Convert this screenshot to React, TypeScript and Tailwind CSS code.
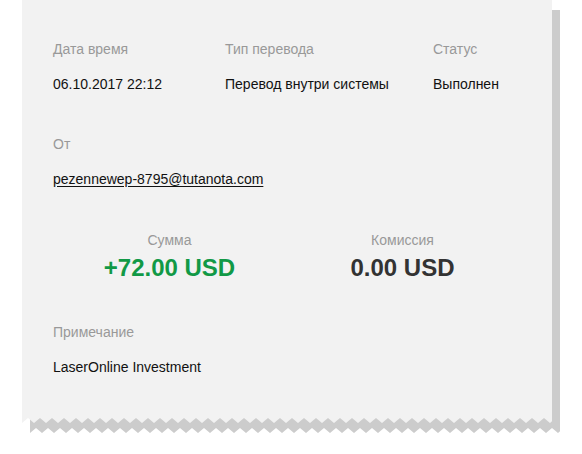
import React from 'react';

const FONT = { fontFamily: '"Liberation Sans", Arial, sans-serif' };

// torn paper edge under the card
const Zigzag: React.FC<{ width: number; color: string }> = ({ width, color }) => {
    const step = 12;
    const h = 6;
    let d = `M0 0 L0 ${h}`;
    for (let x = 0; x < width; x += step) {
        d += ` L${x + step / 2} ${h - 5} L${Math.min(x + step, width)} ${h}`;
    }
    d += ` L${width} 0 Z`;
    return (
        <svg width={width} height={h} viewBox={`0 0 ${width} ${h}`} className="block">
            <path d={d} fill={color} />
        </svg>
    );
};

const Field: React.FC<{ label: string; value: React.ReactNode; className?: string }> = ({ label, value, className }) => (
    <div className={className}>
        <div className="text-[14px] leading-4 text-[#999999]">{label}</div>
        <div className="mt-[19px] text-[14px] leading-4 text-[#111111]">{value}</div>
    </div>
);

export default function App() {
    return (
        <div className="w-[582px] h-[454px] bg-white overflow-hidden" style={FONT}>
            <div className="pl-[22px]">
                <div className="relative w-[530px]">
                    {/* shadow layer */}
                    <div className="absolute inset-0 translate-x-[8px] translate-y-[10px] flex flex-col">
                        <div className="flex-1 bg-[#cccccc]" />
                        <Zigzag width={530} color="#cccccc" />
                    </div>

                    <div className="relative">
                        <div className="bg-[#f2f2f2] px-[31px] pt-[41px] pb-[42px]">
                            <div className="flex">
                                <Field label="Дата время" value="06.10.2017 22:12" className="w-[172px]" />
                                <Field label="Тип перевода" value="Перевод внутри системы" className="w-[208px]" />
                                <Field label="Статус" value="Выполнен" />
                            </div>

                            <Field
                                label="От"
                                value={<span className="underline underline-offset-2">pezennewep-8795@tutanota.com</span>}
                                className="mt-[44px]"
                            />

                            <div className="flex mt-[45px] -ml-[1px]">
                                <div className="w-[235px] flex flex-col items-center">
                                    <div className="text-[14px] leading-4 text-[#999999]">Сумма</div>
                                    <div className="mt-[7px] text-[24px] leading-[26px] font-bold text-[#119946]">+72.00 USD</div>
                                </div>
                                <div className="w-[231px] flex flex-col items-center">
                                    <div className="text-[14px] leading-4 text-[#999999]">Комиссия</div>
                                    <div className="mt-[7px] text-[24px] leading-[26px] font-bold text-[#333333]">0.00 USD</div>
                                </div>
                            </div>

                            <Field label="Примечание" value="LaserOnline Investment" className="mt-[43px]" />
                        </div>
                        <Zigzag width={530} color="#f2f2f2" />
                    </div>
                </div>
            </div>
        </div>
    );
}
